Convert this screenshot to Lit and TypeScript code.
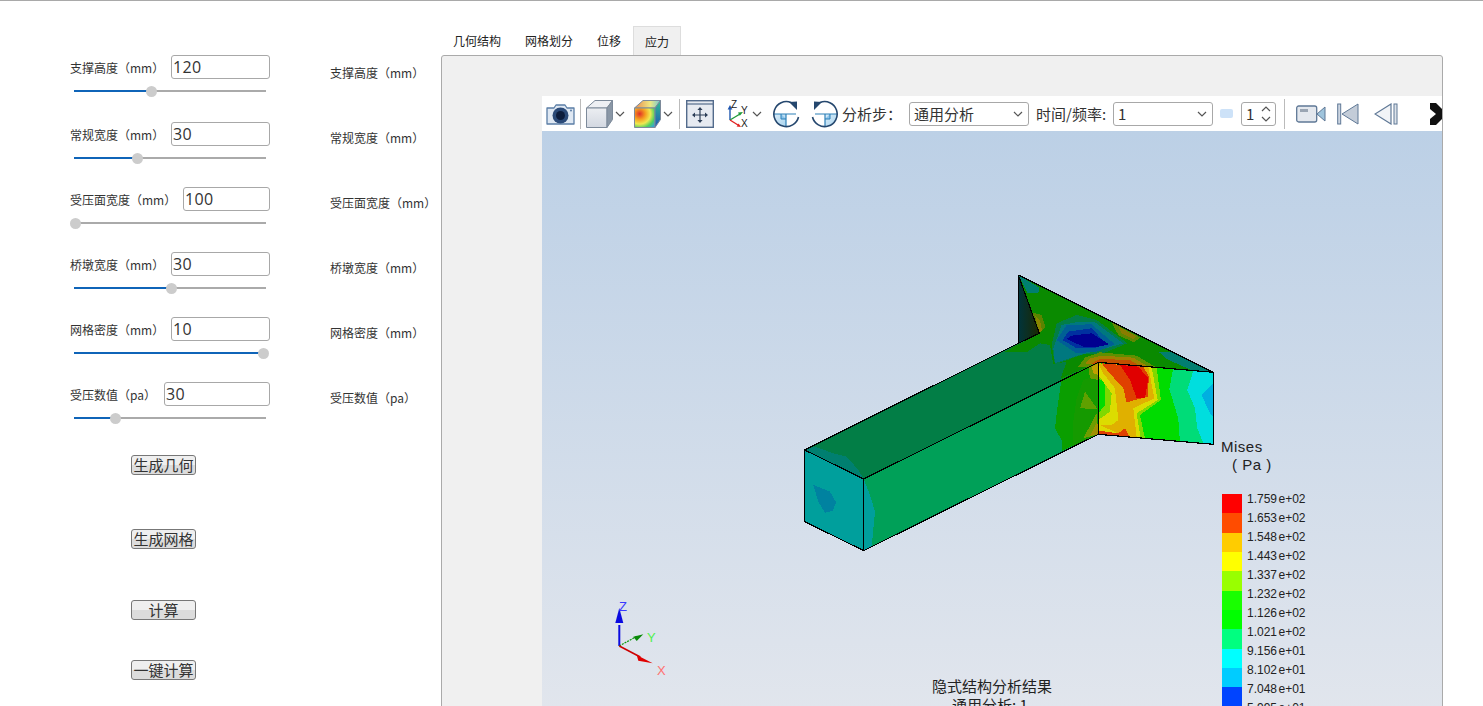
import { LitElement, html, css, svg } from 'lit';
import { customElement } from 'lit/decorators.js';

// thumb is the slider knob offset from the track start, in px
const params = [
  { label: '支撑高度（mm）', value: '120', thumb: 77, cls: '' },
  { label: '常规宽度（mm）', value: '30', thumb: 63, cls: '' },
  { label: '受压面宽度（mm）', value: '100', thumb: 1, cls: 'wide' },
  { label: '桥墩宽度（mm）', value: '30', thumb: 97, cls: '' },
  { label: '网格密度（mm）', value: '10', thumb: 189, cls: '' },
  { label: '受压数值（pa）', value: '30', thumb: 41, cls: 'narrow' },
];

const actions = ['生成几何', '生成网格', '计算', '一键计算'];
const tabs = ['几何结构', '网格划分', '位移', '应力'];

const legend = [
  ['#ff0000', '1.759', 'e+02', 19],
  ['#ff4c00', '1.653', 'e+02', 20],
  ['#ffcc00', '1.548', 'e+02', 19],
  ['#ffff00', '1.443', 'e+02', 19],
  ['#99ff00', '1.337', 'e+02', 20],
  ['#19ff00', '1.232', 'e+02', 19],
  ['#00ff00', '1.126', 'e+02', 19],
  ['#00ff80', '1.021', 'e+02', 20],
  ['#00ffff', '9.156', 'e+01', 19],
  ['#00ccff', '8.102', 'e+01', 19],
  ['#0044ff', '7.048', 'e+01', 19],
  ['#0022ff', '5.995', 'e+01', 19],
] as const;

// contour bands, drawn back to front: [fill, points]
const bands: [string, string][] = [
  // top face and wing
  ['#027e46', '44,555 685,235 748,205 685,30 1270,322 925,292 221,642'],
  ['#0a8a00', '640,262 710,262 750,235 780,240 790,298 830,290 812,340 925,292 1270,322 685,30 748,205'],
  ['#007f70', '685,30 748,68 745,83 712,83'],
  ['#5a8400', '725,142 755,150 766,185 748,205'],
  ['#8a8400', '735,150 750,165 756,195 748,205'],
  ['#027e46', '785,240 800,175 860,150 920,165 1012,235 940,265 880,268 795,298'],
  ['#00787f', '790,250 815,180 870,170 915,172 1000,235 930,255 870,270 795,295'],
  ['#005f95', '800,225 830,180 905,178 975,238 920,260 860,265'],
  ['#0030a0', '818,225 835,200 905,190 945,232 915,250 860,250'],
  ['#000090', '830,222 845,212 905,205 958,238 925,245 880,245'],
  ['#5f8800', '965,172 1052,218 1030,232 985,210'],
  ['#8a7c00', '985,185 1040,214 1030,222 995,205'],
  ['#027e70', '1108,262 1150,262 1270,322 1210,318 1130,282'],
  ['#5f9000', '865,305 885,278 930,262 1040,272 1095,305'],
  ['#a08000', '885,298 900,280 935,272 1030,278 1070,302'],
  ['#c05000', '905,296 930,282 1020,285 1045,300'],
  ['#007f70', '44,555 75,545 130,565 170,575 205,615 221,642'],
  // front face
  ['#009f9c', '44,555 221,642 221,857 44,770'],
  ['#0082a0', '70,660 120,680 138,712 128,738 105,743 85,710'],
  // long side face
  ['#00a058', '221,642 925,292 925,508 221,857'],
  ['#009f9c', '221,642 240,690 255,740 245,845 221,857'],
  ['#0a9e00', '815,340 925,292 925,508 815,558 815,525 795,490 802,430'],
  ['#159a00', '860,400 880,345 925,330 925,508 850,540 850,470'],
  ['#5fa000', '885,380 922,432 870,430'],
  ['#6f9c00', '880,520 920,445 925,508'],
  ['#a09000', '900,513 922,470 925,508'],
  ['#6f9c00', '895,305 925,293 925,345 900,340'],
  ['#c0a000', '905,305 925,295 925,330 910,325'],
  // wall face
  ['#00dc00', '925,292 1270,322 1270,538 925,508'],
  ['#00dc78', '1150,310 1270,322 1270,538 1170,530 1165,460 1138,372'],
  ['#00dede', '1210,318 1270,322 1270,538 1240,535 1222,490 1215,430 1192,375'],
  ['#00b0e0', '1270,355 1235,390 1260,445 1270,455'],
  ['#80d800', '925,295 1100,307 1113,405 1050,450 1065,520 1030,515 925,508 925,445 945,420 945,352 925,340'],
  ['#dcdc00', '925,295 1085,305 1103,405 1040,445 1052,518 1010,515 925,500 925,465 960,440 965,385 925,330'],
  ['#e0b000', '925,295 1075,305 1093,400 1030,430 1040,516 1000,513 930,480 965,480 985,465 975,370 940,325'],
  ['#e04000', '935,295 1060,305 1077,335 1073,395 1010,412 1000,370 955,320'],
  ['#e00000', '990,300 1045,305 1075,340 1065,400 1040,400 1020,345'],
  ['#e04000', '925,497 985,505 1005,490 1018,516 925,508'],
];

const chevron = html`<svg class="chev" width="10" height="6" viewBox="0 0 10 6"><path d="M1 1l4 4 4-4" fill="none" stroke="#555" stroke-width="1.2"/></svg>`;

@customElement('app-root')
export class AppRoot extends LitElement {
  static styles = css`
    :host {
      display: block;
      height: 706px;
      overflow: hidden;
      background: #fff;
      font-family: "Noto Sans CJK SC", "Open Sans", sans-serif;
      color: #333;
    }
    .page {
      display: flex;
      height: 705px;
      border-top: 1px solid #a9a9a9;
    }
    .controls {
      width: 200px;
      margin-left: 70px;
      flex: none;
      padding-top: 54px;
    }
    .row {
      height: 65px;
    }
    .row:first-child {
      height: 67px;
    }
    .field {
      display: flex;
      justify-content: space-between;
      align-items: center;
      height: 24px;
    }
    .field label {
      font-size: 12px;
      line-height: 24px;
      padding-top: 2px;
    }
    .field input {
      box-sizing: border-box;
      width: 99px;
      height: 24px;
      border: 1px solid #a8a8a8;
      border-radius: 3px;
      padding: 0 1px;
      font: 16px "Open Sans", sans-serif;
      letter-spacing: 0.4px;
      color: #333;
      background: #fff;
    }
    .row.wide .field input {
      width: 87px;
    }
    .row.narrow .field input {
      width: 106px;
    }
    .slider {
      position: relative;
      height: 2px;
      margin: 11px 4px 0;
      background: #aaa;
    }
    .fill {
      height: 100%;
      background: #0f64b8;
    }
    .thumb {
      position: absolute;
      top: -4.5px;
      width: 11px;
      height: 11px;
      margin-left: -5.5px;
      border-radius: 50%;
      background: #ccc;
    }
    .actions {
      display: flex;
      flex-direction: column;
      align-items: flex-start;
      padding: 8px 0 0 61px;
    }
    .actions button {
      box-sizing: border-box;
      width: 65px;
      height: 20px;
      padding: 0;
      border: 1px solid #777;
      border-radius: 3px;
      background: linear-gradient(#efefef 50%, #dcdcdc 50%);
      font: 15px/18px "Noto Sans CJK SC", sans-serif;
      color: #333;
      white-space: nowrap;
    }
    .actions button:nth-child(2) {
      margin-top: 54px;
    }
    .actions button:nth-child(3) {
      margin-top: 51px;
    }
    .actions button:nth-child(4) {
      margin-top: 40px;
    }
    .captions {
      width: 111px;
      margin-left: 60px;
      flex: none;
      padding-top: 60px;
      font-size: 12px;
      white-space: nowrap;
    }
    .captions div {
      height: 65px;
      line-height: 24px;
    }
    .main {
      flex: none;
      width: 1002px;
      padding-top: 25px;
    }
    .tabs {
      display: flex;
      height: 29px;
      font-size: 12px;
    }
    .tabs div {
      box-sizing: border-box;
      padding: 0 12px;
      line-height: 30px;
      color: #222;
    }
    .tabs div.active {
      background: #f0f0f0;
      border: 1px solid #ddd;
      border-bottom: none;
      padding: 0 11px;
    }
    .panel {
      box-sizing: border-box;
      height: 660px;
      padding: 40px 0 0 100px;
      border: 1px solid #aaa;
      border-radius: 3px 3px 0 0;
      background: #f0f0f0;
    }
    .toolbar {
      display: flex;
      align-items: center;
      height: 35px;
      padding-left: 4px;
      background: #fff;
      overflow: hidden;
      font-size: 15px;
      white-space: nowrap;
    }
    .toolbar > * {
      flex: none;
    }
    .toolbar svg {
      display: block;
    }
    .sep {
      width: 1px;
      height: 30px;
      background: #bbb;
    }
    .sep.first {
      margin: 0 5px;
    }
    .sep.second {
      margin: 0 6px;
    }
    .sep.third {
      margin: 0 11px 0 8px;
    }
    .chev-a {
      margin: 0 9px 0 2px;
    }
    .chev-b {
      margin-left: 2px;
    }
    .chev-c {
      margin: 0 10px 0 1px;
    }
    .axes,
    .step-last {
      margin-left: 11px;
    }
    .rotate-back {
      margin-left: 11px;
    }
    .step-prev {
      margin-left: 15px;
    }
    .step-next {
      margin-left: 32px;
    }
    .step-label {
      width: 67px;
      margin-left: 3px;
    }
    .freq-label {
      width: 77px;
      margin-left: 7px;
    }
    .select {
      box-sizing: border-box;
      display: flex;
      align-items: center;
      justify-content: space-between;
      height: 24px;
      padding: 0 5px 0 4px;
      border: 1px solid #a8a8a8;
      border-radius: 3px;
    }
    .select.step {
      width: 120px;
    }
    .select.freq {
      width: 100px;
    }
    .spin {
      box-sizing: border-box;
      display: flex;
      align-items: center;
      justify-content: space-between;
      width: 35px;
      height: 24px;
      padding: 0 4px;
      border: 1px solid #a8a8a8;
      border-radius: 3px;
    }
    .arrows {
      display: flex;
      flex-direction: column;
      gap: 4px;
    }
    .arrows .up {
      transform: scaleY(-1);
    }
    .handle {
      width: 13px;
      height: 9px;
      margin: 0 8px 0 7px;
      border-radius: 2px;
      background: #cde2f8;
    }
    .view {
      height: 590px;
      background: linear-gradient(#bcd0e6, #e2e6ed);
    }
    .view svg {
      display: block;
    }
    .view text {
      font-family: "Liberation Sans", "Noto Sans CJK SC", sans-serif;
      fill: #222;
    }
    .view .cn {
      font-family: "Noto Sans CJK SC", sans-serif;
      font-size: 15px;
      text-anchor: middle;
    }
    .view .title {
      font-size: 15px;
      letter-spacing: 0.5px;
    }
    .view .tz {
      fill: #3a3aff;
    }
    .view .ty {
      fill: #50f050;
    }
    .view .tx {
      fill: #ff7070;
    }
  `;

  private toolbar() {
    return html`<div class="toolbar">
      <svg width="29" height="24" viewBox="0 0 29 24">
        <path d="M1 6h7l2-3h9l2 3h7v16H1z" fill="#dfe8f3" stroke="#5b7ea6" stroke-width="1.3" stroke-linejoin="round"/>
        <circle cx="14.500" cy="13.500" r="8" fill="#2b4a78"/><circle cx="14.500" cy="13.500" r="4.500" fill="#0c1c3c"/>
        <circle cx="25" cy="8.500" r="1" fill="#5b7ea6"/>
      </svg>
      <div class="sep first"></div>
      <svg width="27" height="28" viewBox="0 0 27 28">
        <defs><linearGradient id="face" x1="0" y1="0" x2="0" y2="1"><stop offset="0" stop-color="#eceef2"/><stop offset="1" stop-color="#d3d8e1"/></linearGradient></defs>
        <path d="M.5 8L9 .5h17.500L21 8z" fill="#eef0f4" stroke="#7d8a9a"/>
        <path d="M.5 8H21v19.500H.5z" fill="url(#face)" stroke="#7d8a9a"/>
        <path d="M21 8L26.500.5v19L21 27.500z" fill="#8a97a6" stroke="#7d8a9a"/>
      </svg>
      <span class="chev-a">${chevron}</span>
      <svg width="27" height="28" viewBox="0 0 27 28">
        <defs><radialGradient id="hot" cx="25%" cy="30%" r="95%"><stop offset="0" stop-color="#e0302a"/><stop offset=".3" stop-color="#f5a020"/><stop offset=".55" stop-color="#f0e850"/><stop offset=".78" stop-color="#50d060"/><stop offset="1" stop-color="#30a0e0"/></radialGradient>
        <linearGradient id="cap" x1="0" x2="1"><stop offset="0" stop-color="#e88a50"/><stop offset=".6" stop-color="#f0e880"/><stop offset="1" stop-color="#70c8d8"/></linearGradient>
        <linearGradient id="edge" x1="0" y1="0" x2="0" y2="1"><stop offset="0" stop-color="#30c090"/><stop offset="1" stop-color="#1f55b8"/></linearGradient></defs>
        <path d="M.5 8L9 .5h17.500L21 8z" fill="url(#cap)" stroke="#7d8a9a"/>
        <path d="M.5 8H21v19.500H.5z" fill="url(#hot)" stroke="#7d8a9a"/>
        <path d="M21 8L26.500.5v19L21 27.500z" fill="url(#edge)" stroke="#7d8a9a"/>
      </svg>
      <span class="chev-b">${chevron}</span>
      <div class="sep second"></div>
      <svg width="28" height="28" viewBox="0 0 28 28">
        <rect x=".7" y=".7" width="26.600" height="26.600" fill="#e6eaf1" stroke="#536b8c" stroke-width="1.4"/>
        <path d="M1 4h26" stroke="#536b8c" stroke-width="1.2"/>
        <path d="M14 9v12M8 15h12" stroke="#2d3e58" stroke-width="1.2"/>
        <path d="M14 7l-2.600 3h5.200zM14 23l-2.600-3h5.200zM6 15l3-2.600v5.200zM22 15l-3-2.600v5.200z" fill="#2d3e58"/>
      </svg>
      <svg class="axes" width="26" height="28" viewBox="0 0 26 28">
        <path d="M5 20V8" stroke="#1f56b0" stroke-width="1.400"/><path d="M5 5L2.600 9.500h4.800z" fill="#1f56b0"/>
        <path d="M5 20l10-6" stroke="#1f9a3a" stroke-width="1.400"/><path d="M18 12l-5 .4 1.800 3.400z" fill="#1f9a3a"/>
        <path d="M5 20l8 5" stroke="#e02020" stroke-width="1.400"/><path d="M16 27l-4.400-.4 2-3.200z" fill="#e02020"/>
        <text x="6" y="8" font-size="10" font-family="Liberation Sans" fill="#222">Z</text>
        <text x="16" y="14" font-size="10" font-family="Liberation Sans" fill="#222">Y</text>
        <text x="16" y="27" font-size="10" font-family="Liberation Sans" fill="#222">X</text>
      </svg>
      <span class="chev-c">${chevron}</span>
      <svg width="28" height="28" viewBox="0 0 28 28">
        <defs><linearGradient id="quad" x1="0" y1="0" x2="1" y2="1"><stop offset="0" stop-color="#d9ecf9"/><stop offset="1" stop-color="#a9d4ee"/></linearGradient></defs>
        <path d="M1.500 14H14v12.500A12.500 12.500 0 0 1 1.500 14z" fill="url(#quad)"/>
        <path d="M9 14v5h5" fill="#8cc4ea" stroke="#2d80b8"/>
        <path d="M1.500 14H24M14 14v12.500" fill="none" stroke="#2d80b8" stroke-width="1.200"/>
        <path d="M19 2.500A12.500 12.500 0 1 0 26.500 17" fill="none" stroke="#25476e" stroke-width="1.600"/>
        <path d="M17 2l8-.5V10z" fill="#25476e"/>
      </svg>
      <svg class="rotate-back" width="28" height="28" viewBox="0 0 28 28">
        <path d="M26.500 14H14v12.500A12.500 12.500 0 0 0 26.500 14z" fill="url(#quad)"/>
        <path d="M19 14v5h-5" fill="#8cc4ea" stroke="#2d80b8"/>
        <path d="M26.500 14H4M14 14v12.500" fill="none" stroke="#2d80b8" stroke-width="1.200"/>
        <path d="M9 2.500A12.500 12.500 0 1 1 1.500 17" fill="none" stroke="#25476e" stroke-width="1.600"/>
        <path d="M11 2l-8-.5V10z" fill="#25476e"/>
      </svg>
      <span class="step-label">分析步：</span>
      <div class="select step">通用分析 ${chevron}</div>
      <span class="freq-label">时间/频率:</span>
      <div class="select freq">1 ${chevron}</div>
      <div class="handle"></div>
      <div class="spin">1 <span class="arrows"><span class="up">${chevron}</span><span>${chevron}</span></span></div>
      <div class="sep third"></div>
      <svg width="30" height="18" viewBox="0 0 30 18">
        <rect x=".7" y="1" width="20" height="16" rx="2" fill="#e4e8ee" stroke="#5f7896" stroke-width="1.300"/>
        <rect x="4" y="4" width="8" height="3" fill="#9aa5b3"/>
        <path d="M21 9l8-7v14z" fill="#9fc4dc" stroke="#5f7896"/>
      </svg>
      <svg class="step-last" width="22" height="22" viewBox="0 0 22 22">
        <rect x=".7" y="1" width="3" height="20" fill="#cdd6e2" stroke="#5f7896"/>
        <path d="M21 1v20L5 11z" fill="#c3ccd8" stroke="#5f7896"/>
      </svg>
      <svg class="step-prev" width="24" height="22" viewBox="0 0 24 22">
        <path d="M17 1v20L1 11z" fill="#f2f4f7" stroke="#5f7896" stroke-width="1.200"/>
        <rect x="20" y="1" width="3" height="20" fill="#dde3ea" stroke="#5f7896"/>
      </svg>
      <svg class="step-next" width="13" height="22" viewBox="0 0 13 22">
        <path d="M0 0h6l7 7v8l-7 7H0z" fill="#111"/>
        <path d="M0 6l6 5-6 5z" fill="#fff"/>
      </svg>
    </div>`;
  }

  private scene() {
    // viewBox uses page coordinates of the reference so the model reads straight across
    let y = 494;
    return html`<svg width="900" height="575" viewBox="542 131 900 575">
      <defs>
        <linearGradient id="shade" x1="0" x2="1"><stop offset="0" stop-color="#00343c"/><stop offset="1" stop-color="#1c2800"/></linearGradient>
      </defs>
      <g transform="translate(790 265) scale(.3333)" shape-rendering="crispEdges">
        ${bands.map(([fill, points]) => svg`<polygon points=${points} fill=${fill}/>`)}
      </g>
      <polygon points="1018.300,275 1039.300,333.300 1018.300,343.300" fill="url(#shade)"/>
      <g transform="translate(790 265) scale(.3333)" fill="none" stroke="#000" stroke-width="3.500" stroke-linejoin="round" shape-rendering="crispEdges">
        <path d="M685 30V235L44 555V770L221 857L925 508V292L221 642L44 555M221 642V857"/>
        <path d="M685 30L1270 322V538L925 508M925 292L1270 322M685 30L748 205L685 235"/>
      </g>

      <text class="title" x="1221" y="452">Mises</text>
      <text class="title" x="1232" y="470">( Pa )</text>
      ${legend.map(([color, num, exp, h], i) => {
        const top = y;
        y += h;
        const base = 503 + i * 19;
        return svg`<rect x="1222" y=${top} width="20" height=${h} fill=${color}/>
          <text x="1247" y=${base} font-size="12">${num}</text>
          <text x="1278.500" y=${base} font-size="12">${exp}</text>`;
      })}

      <path d="M619.300 646V625" stroke="#0a0ae0" stroke-width="2"/>
      <path d="M619.300 608l-4 15h8z" fill="#0a0ae0"/>
      <path d="M619.300 646l18-10" stroke="#0a9a0a" stroke-width="1.200" stroke-dasharray="2 1"/>
      <path d="M643.300 634.300l-10 2.400 3.400 4.300z" fill="#0a8a0a"/>
      <path d="M619.300 646l21 11" stroke="#c00" stroke-width="1.600"/>
      <path d="M652.700 663.300L636.700 655l1.600 5.700z" fill="#e00000"/>
      <text class="tz" x="619" y="611" font-size="13">Z</text>
      <text class="ty" x="647" y="642" font-size="13">Y</text>
      <text class="tx" x="657" y="675" font-size="13">X</text>

      <text class="cn" x="992" y="692">隐式结构分析结果</text>
      <text class="cn" x="990" y="711">通用分析: 1</text>
    </svg>`;
  }

  render() {
    return html`<div class="page">
      <div class="controls">
        <div>
          ${params.map(p => html`<div class="row ${p.cls}">
            <div class="field"><label>${p.label}</label><input .value=${p.value} /></div>
            <div class="slider">
              <div class="fill" style="width:${p.thumb}px"></div>
              <div class="thumb" style="left:${p.thumb}px"></div>
            </div>
          </div>`)}
        </div>
        <div class="actions">${actions.map(a => html`<button>${a}</button>`)}</div>
      </div>
      <div class="captions">${params.map(p => html`<div>${p.label}</div>`)}</div>
      <div class="main">
        <div class="tabs">${tabs.map((t, i) => html`<div class=${i === 3 ? 'active' : ''}>${t}</div>`)}</div>
        <div class="panel">
          ${this.toolbar()}
          <div class="view">${this.scene()}</div>
        </div>
      </div>
    </div>`;
  }
}
